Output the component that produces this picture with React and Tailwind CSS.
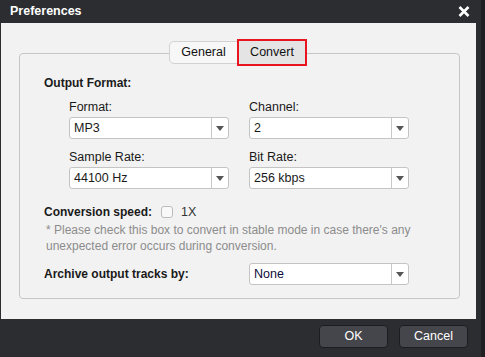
import React from "react";

function Select({ value, valueClass = "text-[#1a1a1a]" }) {
  return (
    <div className="flex h-[22px] w-[160px] items-stretch rounded-[3px] border border-[#c4c4c4] bg-white">
      <div className={`flex flex-1 items-center pl-[4px] text-[12.5px] ${valueClass}`}>{value}</div>
      <div className="flex w-[17px] items-center justify-center border-l border-[#c8c8c8]">
        <svg width="8" height="5" viewBox="0 0 8 5">
          <path d="M0 0 L8 0 L4 5 Z" fill="#555" />
        </svg>
      </div>
    </div>
  );
}

function Field({ label, value }) {
  return (
    <div className="flex flex-col">
      <div className="h-[16px] text-[12.5px] leading-[16px] text-[#1a1a1a]">{label}</div>
      <div className="mt-[2px]">
        <Select value={value} />
      </div>
    </div>
  );
}

export default function App() {
  return (
    <div
      className="flex h-[357px] w-[485px] bg-[#1f2023]"
      style={{ fontFamily: '"Liberation Sans", Arial, sans-serif' }}
    >
      {/* window */}
      <div className="flex w-[481px] flex-col bg-[#2c2d31]">
        {/* title bar */}
        <div className="flex h-[23px] items-center justify-between pl-[10px] pr-[11px]">
          <span className="text-[12.5px] font-bold text-white">Preferences</span>
          <svg width="12" height="11" viewBox="0 0 12 11">
            <path d="M1.5 1 L10.5 10 M10.5 1 L1.5 10" stroke="#fff" strokeWidth="2.6" />
          </svg>
        </div>

        {/* body */}
        <div className="ml-[1px] mr-[5px] h-[296px] bg-[#f2f2f2] pl-[18px] pt-[30px]">
          <div className="h-[246px] w-[441px] rounded-[4px] border border-[#c6c6c6]">
            {/* tabs */}
            <div className="-mt-[13px] flex h-[23px] items-center pl-[149px]">
              <div className="flex h-[23px] w-[69px] items-center justify-center rounded-l-[5px] border border-[#d2d2d2] bg-[#f7f7f7] text-[12.5px] text-[#111]">
                General
              </div>
              <div className="-ml-[1px] flex h-[27px] w-[70px] items-center justify-center border-2 border-[#e8141f] bg-[#e4e4e4] text-[12.5px] text-[#111]">
                Convert
              </div>
            </div>

            <div className="pl-[24px]">
              <div className="mt-[11px] h-[16px] text-[12px] font-bold leading-[16px] text-[#1a1a1a]">
                Output Format:
              </div>

              <div className="ml-[25px] mt-[8px] grid grid-cols-[160px_160px] gap-x-[20px] gap-y-[10px]">
                <Field label="Format:" value="MP3" />
                <Field label="Channel:" value="2" />
                <Field label="Sample Rate:" value="44100 Hz" />
                <Field label="Bit Rate:" value="256 kbps" />
              </div>

              <div className="mt-[15px] flex h-[16px] items-center">
                <span className="text-[12px] font-bold text-[#1a1a1a]">Conversion speed:</span>
                <div className="ml-[9px] h-[12px] w-[12px] rounded-[3px] border border-[#bcbcbc] bg-[#f9f9f9]"></div>
                <span className="ml-[8px] text-[12.5px] text-[#333]">1X</span>
              </div>

              <div className="mt-[2px] w-[390px] pl-[2px] text-[12px] leading-[16px] text-[#8c8c8c]">
                * Please check this box to convert in stable mode in case there's any unexpected error occurs during conversion.
              </div>

              <div className="mt-[9px] flex items-center">
                <span className="w-[205px] text-[12px] font-bold text-[#1a1a1a]">Archive output tracks by:</span>
                <Select value="None" valueClass="text-[#0d0d3a]" />
              </div>
            </div>
          </div>
        </div>

        {/* footer */}
        <div className="flex flex-1 items-start justify-end gap-[11px] pr-[13px] pt-[6px]">
          <button className="flex h-[23px] w-[69px] items-center justify-center rounded-[4px] border border-[#1c1d20] bg-[#45464b] text-[12.5px] text-white">
            OK
          </button>
          <button className="flex h-[23px] w-[69px] items-center justify-center rounded-[4px] border border-[#1c1d20] bg-[#45464b] text-[12.5px] text-white">
            Cancel
          </button>
        </div>
      </div>
      <div className="flex-1"></div>
    </div>
  );
}
